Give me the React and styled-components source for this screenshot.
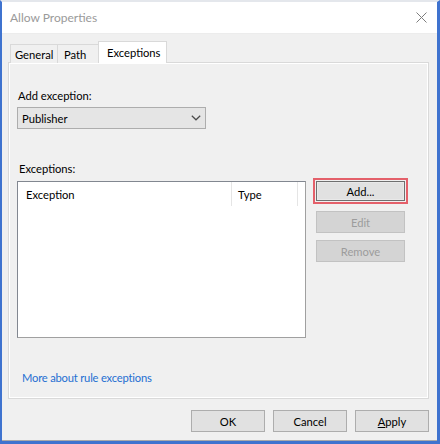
import React from "react";
import styled, { createGlobalStyle } from "styled-components";

const Global = createGlobalStyle`
  html, body { margin: 0; padding: 0; background: #f0f0f0; }
  * { box-sizing: border-box; }
  body { font-family: Lato, "Noto Sans", "Liberation Sans", sans-serif; font-size: 11.2px; color: #000; }
`;

const Window = styled.div`
  width: 440px;
  height: 444px;
  display: flex;
  flex-direction: column;
  border-left: 2px solid #3f73cf;
  border-right: 3px solid #3f73cf;
  border-bottom: 3px solid #3f73cf;
  border-top: 2px solid #e4e7ec;
  background: #f0f0f0;
  overflow: hidden;
`;

const TitleBar = styled.div`
  height: 32px;
  flex: none;
  background: #fff;
  border-bottom: 1px solid #ececec;
  display: flex;
  align-items: center;
  justify-content: space-between;
  padding: 0 10px 0 8px;
`;

const Title = styled.span`
  font-size: 12px;
  color: #9a9a9a;
`;

const CloseBtn = styled.div`
  width: 12px;
  height: 12px;
  display: flex;
  align-items: center;
  justify-content: center;
`;

const Body = styled.div`
  flex: 1;
  display: flex;
  flex-direction: column;
  padding: 7px 8px 0 6px;
  border-bottom: 1px solid #a9a9a9;
`;

const TabRow = styled.div`
  display: flex;
  align-items: flex-end;
  height: 22px;
  padding-left: 2px;
  margin-bottom: -1px;
  position: relative;
  z-index: 1;
`;

const Tab = styled.div`
  height: ${(p) => (p.$active ? "22px" : "19px")};
  width: ${(p) => p.$w}px;
  padding-left: ${(p) => p.$pl}px;
  display: flex;
  align-items: center;
  border: 1px solid #d9d9d9;
  border-bottom: none;
  margin-left: ${(p) => (p.$first ? 0 : "-1px")};
  background: ${(p) => (p.$active ? "#fff" : "#f0f0f0")};
  color: #000;
`;

const Panel = styled.div`
  height: 337px;
  border: 1px solid #d9d9d9;
  background: #f0f0f0;
  box-shadow: inset 1px 1px 0 #fff, inset -1px -1px 0 #fff;
  display: flex;
  flex-direction: column;
  padding: 25px 0 0 8px;
`;

const Label = styled.div`
  height: 16px;
  line-height: 16px;
  padding-left: ${(p) => p.$pl || 1}px;
  margin-bottom: ${(p) => p.$mb}px;
`;

const Select = styled.div`
  width: 189px;
  height: 22px;
  background: #e5e5e5;
  border: 1px solid #adadad;
  display: flex;
  align-items: center;
  justify-content: space-between;
  padding: 0 4px 0 4px;
  margin-bottom: 32px;
`;

const ListRow = styled.div`
  display: flex;
  align-items: flex-start;
  margin-top: -3px;
`;

const ListView = styled.div`
  width: 289px;
  height: 157px;
  margin-top: 3px;
  background: #fff;
  border: 1px solid #a0a0a0;
  border-top-color: #828790;
  border-left-color: #828790;
`;

const Header = styled.div`
  display: flex;
  height: 24px;
`;

const HeaderCell = styled.div`
  width: ${(p) => p.$w}px;
  padding-left: ${(p) => p.$pl}px;
  border-right: 1px solid #e5e5e5;
  display: flex;
  align-items: center;
`;

const ButtonCol = styled.div`
  margin-left: 7px;
  display: flex;
  flex-direction: column;
`;

const Highlight = styled.div`
  border: 2px solid #e4606a;
  padding: 1px;
  width: 95px;
  margin-bottom: 7px;
`;

const Button = styled.button`
  font-family: inherit;
  font-size: 11.2px;
  width: ${(p) => p.$w || 89}px;
  height: ${(p) => p.$h || 22}px;
  padding: 0;
  margin: 0 0 ${(p) => p.$mb || 0}px ${(p) => p.$ml || 0}px;
  background: ${(p) => (p.disabled ? "#d4d4d4" : "#e1e1e1")};
  border: 1px solid ${(p) => (p.$focus ? "#6f6f6f" : p.disabled ? "#c2c2c2" : "#adadad")};
  box-shadow: ${(p) => (p.$focus ? "inset 0 0 0 1px #e9e9e9" : "none")};
  color: ${(p) => (p.disabled ? "#9c9c9c" : "#000")};
  display: flex;
  align-items: center;
  justify-content: center;
`;

const Link = styled.a`
  margin-top: 32px;
  margin-left: 5px;
  height: 16px;
  line-height: 16px;
  color: #1f6fd2;
  letter-spacing: -0.2px;
  text-decoration: none;
`;

const Footer = styled.div`
  display: flex;
  justify-content: flex-end;
  gap: 8px;
  margin-top: 11px;
`;

const Under = styled.span`
  text-decoration: underline;
  text-underline-offset: 1px;
`;

export default function App() {
  return (
    <>
      <Global />
      <Window>
        <TitleBar>
          <Title>Allow Properties</Title>
          <CloseBtn>
            <svg width="11" height="11" viewBox="0 0 11 11">
              <path d="M0.5 0.5 L10.5 10.5 M10.5 0.5 L0.5 10.5" stroke="#7d7d7d" strokeWidth="1" fill="none" />
            </svg>
          </CloseBtn>
        </TitleBar>
        <Body>
          <TabRow>
            <Tab $first $w={48} $pl={4}>General</Tab>
            <Tab $w={42} $pl={6}>Path</Tab>
            <Tab $active $w={69} $pl={8}>Exceptions</Tab>
          </TabRow>
          <Panel>
            <Label $mb={3}>Add exception:</Label>
            <Select>
              <span>Publisher</span>
              <svg width="10" height="6" viewBox="0 0 10 6">
                <polyline points="0.8,0.8 5,4.8 9.2,0.8" stroke="#4a4a4a" strokeWidth="1.2" fill="none" />
              </svg>
            </Select>
            <Label $mb={4} $pl={2}>Exceptions:</Label>
            <ListRow>
              <ListView>
                <Header>
                  <HeaderCell $w={214} $pl={8}>Exception</HeaderCell>
                  <HeaderCell $w={66} $pl={6}>Type</HeaderCell>
                </Header>
              </ListView>
              <ButtonCol>
                <Highlight>
                  <Button $focus $h={20}>Add...</Button>
                </Highlight>
                <Button disabled $ml={3} $mb={7}>Edit</Button>
                <Button disabled $ml={3}>Remove</Button>
              </ButtonCol>
            </ListRow>
            <Link href="#">More about rule exceptions</Link>
          </Panel>
          <Footer>
            <Button $w={74}>OK</Button>
            <Button $w={74}>Cancel</Button>
            <Button $w={74}><Under>A</Under>pply</Button>
          </Footer>
        </Body>
      </Window>
    </>
  );
}
